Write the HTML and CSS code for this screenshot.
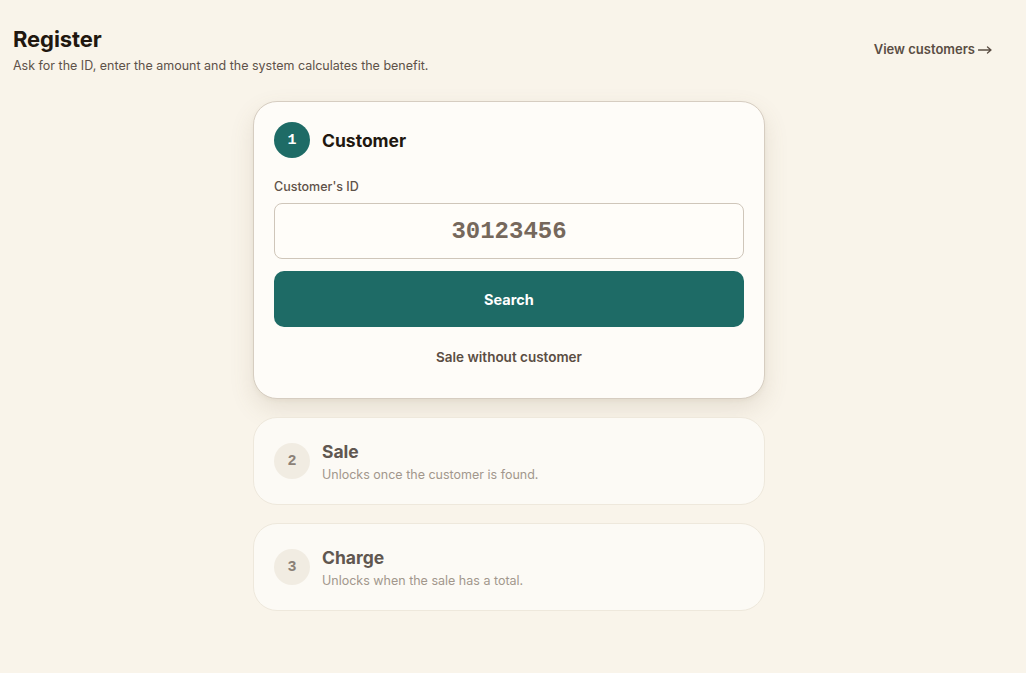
FILE: index.html
```html
<!DOCTYPE html>
<html lang="en">
<head>
<meta charset="utf-8">
<title>Register</title>
<link rel="stylesheet" href="styles.css">
</head>
<body>
<div class="page">
  <header class="header">
    <div class="heading">
      <h1 class="title">Register</h1>
      <p class="subtitle">Ask for the ID, enter the amount and the system calculates the benefit.</p>
    </div>
    <a class="link" href="#">View customers <svg class="arrow" width="14" height="8" viewBox="0 0 14 8" aria-hidden="true"><path d="M0.5 4H13M9.5 1L13 4L9.5 7" fill="none" stroke="currentColor" stroke-width="1.3" stroke-linecap="round" stroke-linejoin="round"/></svg></a>
  </header>

  <main class="steps">
    <section class="card card-active">
      <div class="card-head">
        <span class="badge badge-active">1</span>
        <h2 class="card-title">Customer</h2>
      </div>
      <label class="label" for="cid">Customer's ID</label>
      <input id="cid" class="input" type="text" value="30123456">
      <button class="btn-primary" type="button">Search</button>
      <button class="btn-ghost" type="button">Sale without customer</button>
    </section>

    <section class="card card-locked">
      <span class="badge badge-locked">2</span>
      <div class="locked-text">
        <h2 class="locked-title">Sale</h2>
        <p class="locked-sub">Unlocks once the customer is found.</p>
      </div>
    </section>

    <section class="card card-locked">
      <span class="badge badge-locked">3</span>
      <div class="locked-text">
        <h2 class="locked-title">Charge</h2>
        <p class="locked-sub">Unlocks when the sale has a total.</p>
      </div>
    </section>
  </main>
</div>
</body>
</html>
```

FILE: styles.css
```css
* { box-sizing: border-box; }

html, body {
  margin: 0;
  background: #f9f4ea;
  font-family: Inter, "Liberation Sans", Arial, sans-serif;
  color: #231a14;
}

.page {
  padding: 26px 21px 40px 13px;
}

.header {
  display: flex;
  justify-content: space-between;
  align-items: flex-start;
}

.title {
  margin: 0;
  font-size: 22px;
  font-weight: 700;
  letter-spacing: -0.1px;
  line-height: 26px;
  color: #21170f;
}

.subtitle {
  margin: 6px 0 0 0;
  font-size: 12.5px;
  line-height: 16px;
  color: #5e5249;
}

.link {
  margin: 15px 13px 0 0;
  font-size: 13px;
  font-weight: 600;
  color: #5a4d43;
  text-decoration: none;
  display: flex;
  align-items: center;
  gap: 3px;
}

.arrow {
  display: block;
  margin-top: 1px;
}

.steps {
  width: 512px;
  margin: 27px auto 0 auto;
  display: flex;
  flex-direction: column;
  gap: 18px;
}

.card {
  border-radius: 24px;
  padding: 20px;
}

.card-active {
  background: #fefcf8;
  border: 1px solid #d6cdc1;
  box-shadow: 0 10px 24px rgba(120, 100, 70, 0.14), 0 2px 4px rgba(120, 100, 70, 0.06);
  display: flex;
  flex-direction: column;
  padding-bottom: 24px;
}

.card-head {
  display: flex;
  align-items: center;
  gap: 12px;
}

.badge {
  width: 36px;
  height: 36px;
  border-radius: 50%;
  display: flex;
  align-items: center;
  justify-content: center;
  font-family: "Liberation Mono", "DejaVu Sans Mono", monospace;
  font-weight: 700;
  font-size: 15px;
  flex: none;
}

.badge-active {
  background: #1e6b66;
  color: #ffffff;
}

.badge-locked {
  background: #f1ece2;
  color: #8b8177;
}

.card-title {
  margin: 0;
  font-size: 17.5px;
  font-weight: 700;
  color: #21170f;
}

.label {
  margin-top: 21px;
  font-size: 12.5px;
  font-weight: 500;
  color: #5e5249;
}

.input {
  margin-top: 9px;
  height: 56px;
  width: 100%;
  border: 1px solid #cfc6ba;
  border-radius: 8px;
  background: #fffdf9;
  text-align: center;
  font-family: "Liberation Mono", "DejaVu Sans Mono", monospace;
  font-weight: 700;
  font-size: 24px;
  color: #76685c;
  outline: none;
}

.btn-primary {
  margin-top: 12px;
  height: 56px;
  width: 100%;
  border: none;
  border-radius: 10px;
  background: #1e6b66;
  color: #ffffff;
  font-family: inherit;
  font-size: 14.5px;
  font-weight: 700;
  cursor: pointer;
}

.btn-ghost {
  margin-top: 13px;
  height: 34px;
  border: none;
  background: transparent;
  font-family: inherit;
  font-size: 13.5px;
  font-weight: 600;
  color: #5a4d43;
  cursor: pointer;
}

.card-locked {
  background: #fcfaf5;
  border: 1px solid #eee8dc;
  height: 88px;
  display: flex;
  align-items: center;
  gap: 12px;
}

.locked-text {
  display: flex;
  flex-direction: column;
  margin-top: 1px;
}

.locked-title {
  margin: 0;
  font-size: 17.5px;
  font-weight: 700;
  line-height: 22px;
  color: #605750;
}

.locked-sub {
  margin: 4px 0 0 0;
  font-size: 12.5px;
  line-height: 16px;
  color: #a2978c;
}
```
